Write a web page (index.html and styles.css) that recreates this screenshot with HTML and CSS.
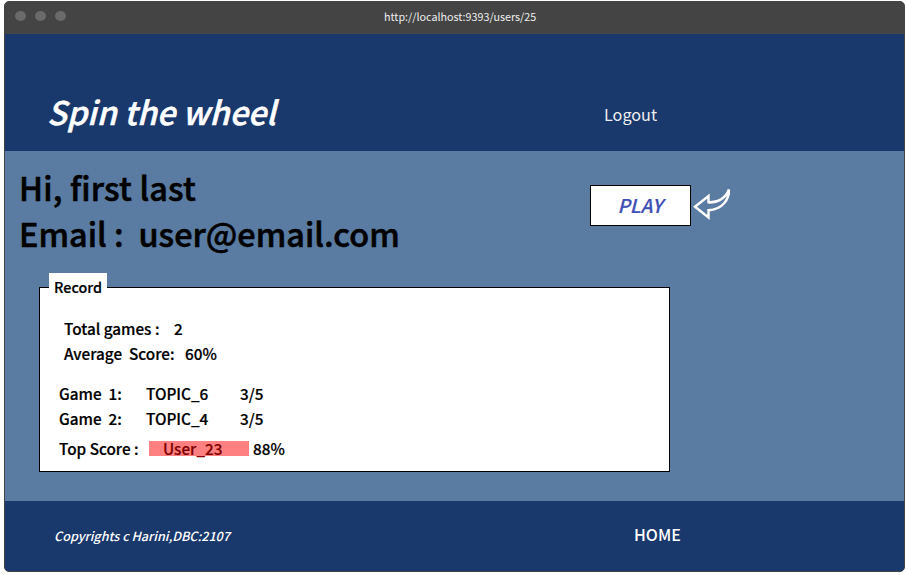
FILE: index.html
```html
<!DOCTYPE html>
<html lang="en">
<head>
<meta charset="utf-8">
<title>Spin the wheel</title>
<link rel="stylesheet" href="styles.css">
</head>
<body>
<div class="window">
  <div class="titlebar">
    <div class="dots"><i></i><i></i><i></i></div>
    <span class="url">http://localhost:9393/users/25</span>
  </div>
  <header class="header">
    <h1 class="brand">Spin the wheel</h1>
    <a class="logout">Logout</a>
  </header>
  <main class="main">
    <div class="top">
      <div class="greeting">
        <div class="hi">Hi, first last</div>
        <div class="email">Email :&nbsp; user@email.com</div>
      </div>
      <div class="action">
        <button class="play">PLAY</button>
        <svg class="arrow" width="40" height="34" viewBox="0 0 40 34"><path d="M3 18.7 L16.5 8 V14.2 C26 14.8 34 10 36.9 1.5 C37.5 11 30.5 21.8 16.5 22.2 V29.5 Z M17 14.5 C26 15 33 9.5 36.7 3" fill="none" stroke="#fff" stroke-width="2.4" stroke-linejoin="miter"/></svg>
      </div>
    </div>
    <section class="record">
      <div class="legend"><span>Record</span></div>
      <div class="row stat"><span class="total-label">Total games :</span><span class="total">2</span></div>
      <div class="row stat"><span class="avg-label">Average&nbsp; Score:</span><span class="avg">60%</span></div>
      <div class="row game first"><span class="name">Game&nbsp; 1:</span><span class="topic">TOPIC_6</span><span class="score">3/5</span></div>
      <div class="row game"><span class="name">Game&nbsp; 2:</span><span class="topic">TOPIC_4</span><span class="score">3/5</span></div>
      <div class="row best"><span class="best-label">Top Score :</span><span class="user"><span>User_23</span></span><span class="pct">88%</span></div>
    </section>
  </main>
  <footer class="footer">
    <span class="copy">Copyrights c Harini,DBC:2107</span>
    <a class="home">HOME</a>
  </footer>
</div>
</body>
</html>
```
FILE: styles.css
```css
* { box-sizing: border-box; }
body {
  margin: 0;
  background: #fff;
  font-family: "Noto Sans CJK SC", "Noto Sans", sans-serif;
  font-weight: 500;
  color: #000;
  white-space: nowrap;
}
.window {
  width: 901px;
  height: 571px;
  margin: 1px 0 0 4px;
  border: 1px solid #444;
  border-radius: 5px;
  overflow: hidden;
  background: #444;
}
.titlebar { height: 32px; display: flex; align-items: flex-start; background: #444; }
.dots { display: flex; gap: 10px; padding: 9px 0 0 10px; width: 379px; }
.dots i { width: 11px; height: 10px; margin-right: -1px; border-radius: 50%; background: #6a6a6a; }
.url { font-size: 10.75px; line-height: 16px; margin-top: 7px; font-weight: 400; color: #eee; }
.header { height: 117px; background: #19386c; display: flex; }
.brand {
  margin: 52px 0 0 42px;
  width: 557px;
  font-size: 32.4px;
  line-height: 50px;
  font-weight: 500;
  font-style: italic;
  color: #fff;
  -webkit-text-stroke: 0.5px;
}
.logout { margin-top: 68px; font-size: 16.2px; line-height: 24px; font-weight: 400; color: #eee; }
.main { height: 350px; background: #5a7ca2; }
.top { display: flex; height: 136px; }
.greeting { width: 585px; padding: 13px 0 0 14px; font-size: 32.4px; line-height: 46px; -webkit-text-stroke: 0.6px; }
.hi { letter-spacing: 0.16px; }
.email { letter-spacing: 0.04px; }
.action { display: flex; padding-top: 34px; }
.play {
  width: 101px;
  height: 41px;
  padding: 0 1px 2px 0;
  border: 1px solid #000;
  background: #fff;
  color: #3f51b5;
  font: italic 500 19px/37px "Noto Sans CJK SC", sans-serif;
  -webkit-text-stroke: 0.2px;
}
.arrow { margin: 3px 0 0 1px; }
.record {
  width: 631px;
  height: 185px;
  margin-left: 34px;
  background: #fff;
  border: 1px solid #000;
  font-size: 15.3px;
  line-height: 23px;
  -webkit-text-stroke: 0.2px;
}
.legend {
  width: 58px;
  height: 32px;
  margin: -15px 0 12px 9px;
  padding-left: 5px;
  background: #fff;
  font-size: 14.4px;
  line-height: 27px;
}
.row { display: flex; height: 25px; }
.stat { padding-left: 24px; }
.total-label { width: 110px; }
.avg-label { width: 121px; }
.game, .best { padding-left: 19px; }
.first { margin-top: 15px; }
.name { width: 87px; }
.topic { width: 94px; }
.best { margin-top: 5px; }
.best-label { width: 90px; }
.user { width: 100px; height: 15px; margin: 4px 4px 0 0; padding-left: 14px; background: #ff8080; color: #800000; line-height: 15px; }
.footer { height: 70px; background: #19386c; color: #fff; display: flex; }
.copy { width: 579px; padding-left: 49px; margin-top: 25px; font-size: 12.6px; line-height: 20px; font-style: italic; }
.home { margin: 21px 0 0 50px; font-size: 16px; line-height: 24px; }
```
